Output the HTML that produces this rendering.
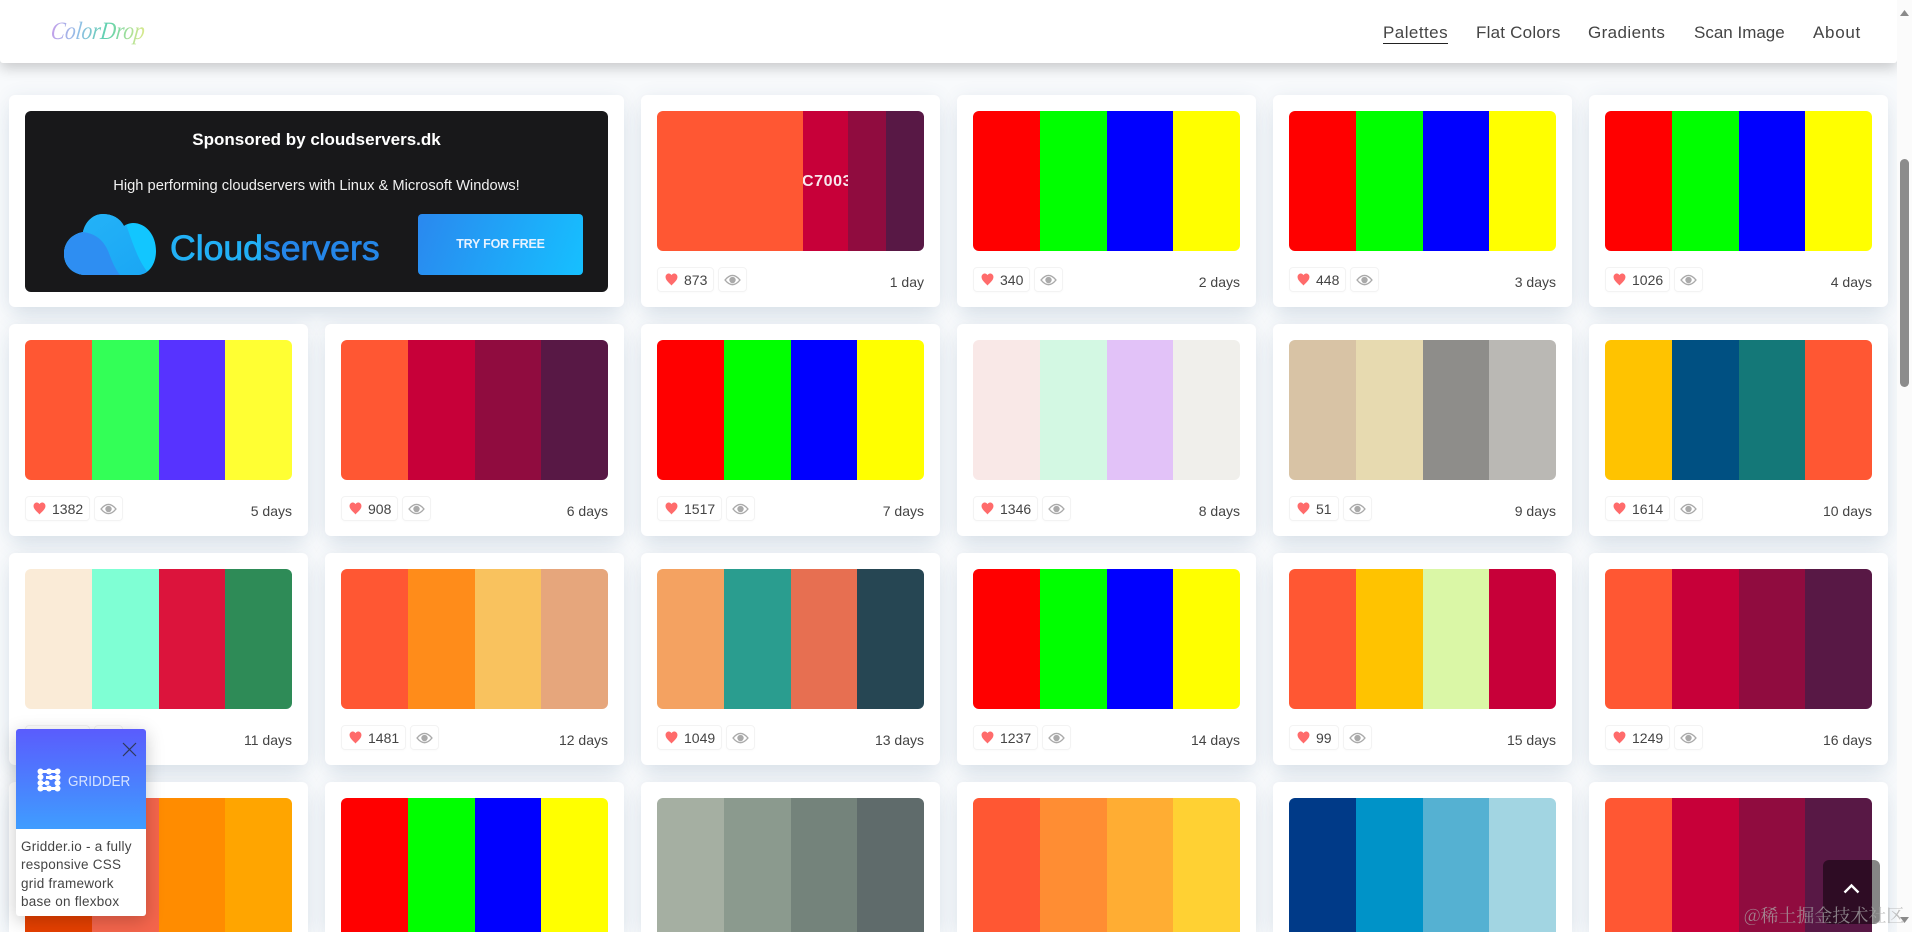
<!DOCTYPE html>
<html lang="en"><head><meta charset="utf-8"><title>ColorDrop</title>
<style>
*{box-sizing:border-box}
html,body{margin:0;padding:0;width:1912px;height:932px;overflow:hidden;background:#f8fafc;font-family:"Liberation Sans",sans-serif;color:#444}
#w{position:relative;width:1912px;height:932px;overflow:hidden;background:#f8fafc}
.c{position:absolute;width:299px;height:212px;background:#fff;border-radius:6px;box-shadow:0 12px 22px -4px rgba(50,90,130,.13),0 0 18px rgba(50,90,130,.07)}
.s{position:absolute;left:16px;top:16px;width:267px;height:140px;border-radius:6px;overflow:hidden;display:flex}
.s i{display:block;flex:1}
.l{height:150px;border-radius:6px 6px 0 0}
.l .s{height:134px;border-radius:6px 6px 0 0}
.f{position:absolute;left:16px;top:172px;height:25px;display:flex;gap:4px}
.b{height:25px;border:1px solid #f3f3f3;border-radius:4px;background:#fff;display:flex;align-items:center;font-size:14px;color:#444;box-shadow:0 1px 2px rgba(0,0,0,.02)}
.h{padding:0 6px 0 7px}
.h svg{width:13px;height:13px;margin-right:6px;display:block}
.e{width:29px;justify-content:center}
.e svg{width:17px;height:12px;display:block}
.d{position:absolute;right:16px;top:177px;font-size:14px;line-height:20px;color:#444}
.nav{position:absolute;left:0;top:0;width:1897px;height:63px;background:#fff;box-shadow:0 5px 14px rgba(0,0,0,.2);border-radius:0 0 3px 3px;z-index:5}
.nav a{position:absolute;top:22px;font-size:17px;line-height:22px;color:#444;text-decoration:none;white-space:nowrap}
.logo{position:absolute;left:51px;top:16px;font:italic 25px/32px "Liberation Serif",serif;transform:scaleX(.85) skewX(-8deg);transform-origin:left center;background:linear-gradient(90deg,#c4a0ea 0,#8fbfe6 30%,#5ed2ac 60%,#d9e98c 100%);-webkit-background-clip:text;background-clip:text;color:transparent;white-space:nowrap}
.sb{position:absolute;left:1897px;top:0;width:15px;height:932px;background:#fbfbfb;z-index:6}
.th{position:absolute;left:3px;top:159px;width:9px;height:228px;border-radius:5px;background:#8c8c8c}
.ad{position:absolute;left:16px;top:16px;width:583px;height:181px;background:#18181a;border-radius:6px;color:#fff;overflow:hidden}
.ad div{position:absolute;white-space:nowrap}
.pop{position:absolute;left:16px;top:729px;width:130px;height:187px;background:#fff;border-radius:3px;box-shadow:0 4px 18px rgba(0,0,0,.22);z-index:7;overflow:hidden}
.pt{position:absolute;left:0;top:0;width:130px;height:100px;background:linear-gradient(180deg,#5a5cfd,#3f9dff)}
.pp{position:absolute;left:5px;top:109px;width:125px;font-size:13.5px;line-height:18.4px;letter-spacing:.25px;color:#444;white-space:nowrap}
.top{position:absolute;left:1823px;top:860px;width:57px;height:64px;background:rgba(0,0,0,.48);border-radius:6px;z-index:7}
.wm{position:absolute;left:1744px;top:902px;height:26px;font:18px/26px "Noto Serif CJK SC","Liberation Serif",serif;color:rgba(170,170,170,.75);white-space:nowrap;z-index:8}
</style></head><body><div id="w">
<svg width="0" height="0" style="position:absolute"><defs>
<symbol id="hh" viewBox="0 0 24 24"><path fill="#ff6b6b" d="M12 23C10 20 1 14 1 7.500 1 3.500 4 1 7 1c2.200 0 4 1.200 5 3 1-1.800 2.800-3 5-3 3 0 6 2.500 6 6.500C23 14 14 20 12 23z"/></symbol>
<symbol id="ee" viewBox="0 0 24 16"><path fill="none" stroke="#aaa" stroke-width="2" d="M1.500 8C5 3.500 8.500 1.500 12 1.500S19 3.500 22.500 8C19 12.500 15.500 14.500 12 14.500S5 12.500 1.500 8z"/><circle cx="12" cy="8" r="4.500" fill="#aaa"/></symbol>
</defs></svg>

<div class="c" style="left:9px;top:95px;width:615px">
<div class="ad">
<div style="left:0;width:583px;text-align:center;top:17px;font-weight:bold;font-size:17px;line-height:24px">Sponsored by cloudservers.dk</div>
<div style="left:0;width:583px;text-align:center;top:65px;font-size:14.700px;line-height:20px;color:#f0f0f0">High performing cloudservers with Linux &amp; Microsoft Windows!</div>
<svg style="position:absolute;left:39px;top:103px" width="92" height="61" viewBox="0 0 92 61"><defs><clipPath id="cl"><path d="M22 61C9 61 0 52 0 40 0 28 8 20 19 18 21 8 29 0 39 0 48 0 56 4 60 12 63 10 66 9 69 9 82 9 92 21 92 37 92 50 85 61 73 61Z"/></clipPath><linearGradient id="g1" x1="0" y1="0" x2="1" y2="1"><stop offset="0" stop-color="#25b4f8"/><stop offset="1" stop-color="#1aa6f4"/></linearGradient></defs><g clip-path="url(#cl)"><rect width="92" height="61" fill="#12c6ff"/><path d="M0 0H58C68 25 72 45 86 61H0Z" fill="url(#g1)"/><path d="M0 61V18H19C35 20 42 30 46 42 49 50 52 56 56 61Z" fill="#2e8ef2"/></g></svg>
<div style="left:145px;top:117px;font-size:35.600px;line-height:40px;-webkit-text-stroke:.8px currentColor;color:#22b0f5">Cloud<span style="color:#2586e8">servers</span></div>
<div style="left:393px;top:103px;width:165px;height:61px;border-radius:4px;background:linear-gradient(110deg,#2a88ef,#16c0ff);text-align:center;line-height:60px;font-weight:bold;font-size:12.500px;letter-spacing:-.2px;color:#e6f2ff">TRY FOR FREE</div>
</div></div>

<div class="c" style="left:641px;top:95px"><div class="s"><i style="flex:none;width:146px;background:#FF5733"></i><i style="flex:none;width:45px;background:#C70039;position:relative;overflow:hidden"><span style="position:absolute;left:-1px;top:61px;font:bold 16px/20px 'Liberation Sans',sans-serif;color:#f8e8ee;font-style:normal;white-space:nowrap;letter-spacing:.6px">C70039</span></i><i style="flex:none;width:38px;background:#900C3F"></i><i style="flex:none;width:38px;background:#581845"></i></div><div class="f"><div class="b h"><svg><use href="#hh"/></svg>873</div><div class="b e"><svg><use href="#ee"/></svg></div></div><div class="d">1 day</div></div>
<div class="c" style="left:957px;top:95px"><div class="s"><i style="background:#f00"></i><i style="background:#0f0"></i><i style="background:#00f"></i><i style="background:#ff0"></i></div><div class="f"><div class="b h"><svg><use href="#hh"/></svg>340</div><div class="b e"><svg><use href="#ee"/></svg></div></div><div class="d">2 days</div></div>
<div class="c" style="left:1273px;top:95px"><div class="s"><i style="background:#f00"></i><i style="background:#0f0"></i><i style="background:#00f"></i><i style="background:#ff0"></i></div><div class="f"><div class="b h"><svg><use href="#hh"/></svg>448</div><div class="b e"><svg><use href="#ee"/></svg></div></div><div class="d">3 days</div></div>
<div class="c" style="left:1589px;top:95px"><div class="s"><i style="background:#f00"></i><i style="background:#0f0"></i><i style="background:#00f"></i><i style="background:#ff0"></i></div><div class="f"><div class="b h"><svg><use href="#hh"/></svg>1026</div><div class="b e"><svg><use href="#ee"/></svg></div></div><div class="d">4 days</div></div>

<div class="c" style="left:9px;top:324px"><div class="s"><i style="background:#FF5733"></i><i style="background:#33FF57"></i><i style="background:#5733FF"></i><i style="background:#FFFF33"></i></div><div class="f"><div class="b h"><svg><use href="#hh"/></svg>1382</div><div class="b e"><svg><use href="#ee"/></svg></div></div><div class="d">5 days</div></div>
<div class="c" style="left:325px;top:324px"><div class="s"><i style="background:#FF5733"></i><i style="background:#C70039"></i><i style="background:#900C3F"></i><i style="background:#581845"></i></div><div class="f"><div class="b h"><svg><use href="#hh"/></svg>908</div><div class="b e"><svg><use href="#ee"/></svg></div></div><div class="d">6 days</div></div>
<div class="c" style="left:641px;top:324px"><div class="s"><i style="background:#f00"></i><i style="background:#0f0"></i><i style="background:#00f"></i><i style="background:#ff0"></i></div><div class="f"><div class="b h"><svg><use href="#hh"/></svg>1517</div><div class="b e"><svg><use href="#ee"/></svg></div></div><div class="d">7 days</div></div>
<div class="c" style="left:957px;top:324px"><div class="s"><i style="background:#F9E8E7"></i><i style="background:#D3F8E3"></i><i style="background:#E2C2F8"></i><i style="background:#F0EFEB"></i></div><div class="f"><div class="b h"><svg><use href="#hh"/></svg>1346</div><div class="b e"><svg><use href="#ee"/></svg></div></div><div class="d">8 days</div></div>
<div class="c" style="left:1273px;top:324px"><div class="s"><i style="background:#D8C3A5"></i><i style="background:#E7DAB0"></i><i style="background:#8E8D8A"></i><i style="background:#BAB8B4"></i></div><div class="f"><div class="b h"><svg><use href="#hh"/></svg>51</div><div class="b e"><svg><use href="#ee"/></svg></div></div><div class="d">9 days</div></div>
<div class="c" style="left:1589px;top:324px"><div class="s"><i style="background:#FFC300"></i><i style="background:#005082"></i><i style="background:#147878"></i><i style="background:#FF5733"></i></div><div class="f"><div class="b h"><svg><use href="#hh"/></svg>1614</div><div class="b e"><svg><use href="#ee"/></svg></div></div><div class="d">10 days</div></div>

<div class="c" style="left:9px;top:553px"><div class="s"><i style="background:#FAEBD7"></i><i style="background:#7FFFD4"></i><i style="background:#DC143C"></i><i style="background:#2E8B57"></i></div><div class="f"><div class="b h"><svg><use href="#hh"/></svg>1200</div><div class="b e"><svg><use href="#ee"/></svg></div></div><div class="d">11 days</div></div>
<div class="c" style="left:325px;top:553px"><div class="s"><i style="background:#FF5733"></i><i style="background:#FF8C1A"></i><i style="background:#F9C25E"></i><i style="background:#E6A67C"></i></div><div class="f"><div class="b h"><svg><use href="#hh"/></svg>1481</div><div class="b e"><svg><use href="#ee"/></svg></div></div><div class="d">12 days</div></div>
<div class="c" style="left:641px;top:553px"><div class="s"><i style="background:#F4A261"></i><i style="background:#2A9D8F"></i><i style="background:#E76F51"></i><i style="background:#264653"></i></div><div class="f"><div class="b h"><svg><use href="#hh"/></svg>1049</div><div class="b e"><svg><use href="#ee"/></svg></div></div><div class="d">13 days</div></div>
<div class="c" style="left:957px;top:553px"><div class="s"><i style="background:#f00"></i><i style="background:#0f0"></i><i style="background:#00f"></i><i style="background:#ff0"></i></div><div class="f"><div class="b h"><svg><use href="#hh"/></svg>1237</div><div class="b e"><svg><use href="#ee"/></svg></div></div><div class="d">14 days</div></div>
<div class="c" style="left:1273px;top:553px"><div class="s"><i style="background:#FF5733"></i><i style="background:#FFC300"></i><i style="background:#DAF7A6"></i><i style="background:#C70039"></i></div><div class="f"><div class="b h"><svg><use href="#hh"/></svg>99</div><div class="b e"><svg><use href="#ee"/></svg></div></div><div class="d">15 days</div></div>
<div class="c" style="left:1589px;top:553px"><div class="s"><i style="background:#FF5733"></i><i style="background:#C70039"></i><i style="background:#900C3F"></i><i style="background:#581845"></i></div><div class="f"><div class="b h"><svg><use href="#hh"/></svg>1249</div><div class="b e"><svg><use href="#ee"/></svg></div></div><div class="d">16 days</div></div>

<div class="c l" style="left:9px;top:782px"><div class="s"><i style="background:#E64000"></i><i style="background:#F4654C"></i><i style="background:#FF8C00"></i><i style="background:#FFA500"></i></div></div>
<div class="c l" style="left:325px;top:782px"><div class="s"><i style="background:#f00"></i><i style="background:#0f0"></i><i style="background:#00f"></i><i style="background:#ff0"></i></div></div>
<div class="c l" style="left:641px;top:782px"><div class="s"><i style="background:#A5AFA2"></i><i style="background:#8B9A8E"></i><i style="background:#74837B"></i><i style="background:#5F6B6B"></i></div></div>
<div class="c l" style="left:957px;top:782px"><div class="s"><i style="background:#FF5733"></i><i style="background:#FF8D33"></i><i style="background:#FFAD33"></i><i style="background:#FFD133"></i></div></div>
<div class="c l" style="left:1273px;top:782px"><div class="s"><i style="background:#003A88"></i><i style="background:#0093C8"></i><i style="background:#55B1D2"></i><i style="background:#A2D5E2"></i></div></div>
<div class="c l" style="left:1589px;top:782px"><div class="s"><i style="background:#FF5733"></i><i style="background:#C70039"></i><i style="background:#900C3F"></i><i style="background:#581845"></i></div></div>

<div class="nav">
<div class="logo">ColorDrop</div>
<a style="left:1383px;top:21px;border-bottom:1.500px solid #222;height:23px;letter-spacing:.45px;padding-top:1px">Palettes</a>
<a style="left:1476px;letter-spacing:.22px">Flat Colors</a>
<a style="left:1588px;letter-spacing:.4px">Gradients</a>
<a style="left:1694px">Scan Image</a>
<a style="left:1813px;letter-spacing:.7px">About</a>
</div>

<div class="sb"><div class="th"></div>
<svg style="position:absolute;left:3px;top:10px" width="9" height="6"><path d="M4.500 0L9 6H0Z" fill="#8a8a8a"/></svg>
<svg style="position:absolute;left:3px;top:917px" width="9" height="6"><path d="M0 0H9L4.500 6Z" fill="#8a8a8a"/></svg>
</div>

<div class="pop"><div class="pt">
<svg style="position:absolute;left:106px;top:13px" width="15" height="15"><path d="M1 1L14 14M14 1L1 14" stroke="#2f3a5c" stroke-width="1.200"/></svg>
<svg style="position:absolute;left:21px;top:39px" width="24" height="24" fill="#fff"><circle cx="3.500" cy="3.500" r="3"/><circle cx="12" cy="3.500" r="3"/><circle cx="20.500" cy="3.500" r="3"/><circle cx="3.500" cy="9" r="3"/><circle cx="14" cy="9.500" r="2.500"/><circle cx="20.500" cy="9.500" r="3"/><circle cx="3.500" cy="15" r="3"/><circle cx="10" cy="15" r="2.500"/><circle cx="20.500" cy="15" r="3"/><circle cx="3.500" cy="20.500" r="3"/><circle cx="12" cy="20.500" r="3"/><circle cx="20.500" cy="20.500" r="3"/><rect x="3" y="2" width="18" height="3"/><rect x="3" y="19" width="18" height="3"/><rect x="9" y="8" width="11" height="3"/><rect x="4" y="14" width="7" height="2"/></svg>
<div style="position:absolute;left:52px;top:42px;font-size:15px;line-height:22px;color:#d6e4ff;white-space:nowrap;transform:scaleX(.9);transform-origin:left center">GRIDDER</div>
</div>
<div class="pp">Gridder.io - a fully<br>responsive CSS<br>grid framework<br>base on flexbox</div></div>

<div class="top"><svg style="position:absolute;left:20px;top:23px" width="17" height="11"><path d="M1.500 9.500L8.500 2.500L15.500 9.500" fill="none" stroke="#fff" stroke-width="2.400"/></svg></div>
<div class="wm">@稀土掘金技术社区</div>
</div></body></html>
